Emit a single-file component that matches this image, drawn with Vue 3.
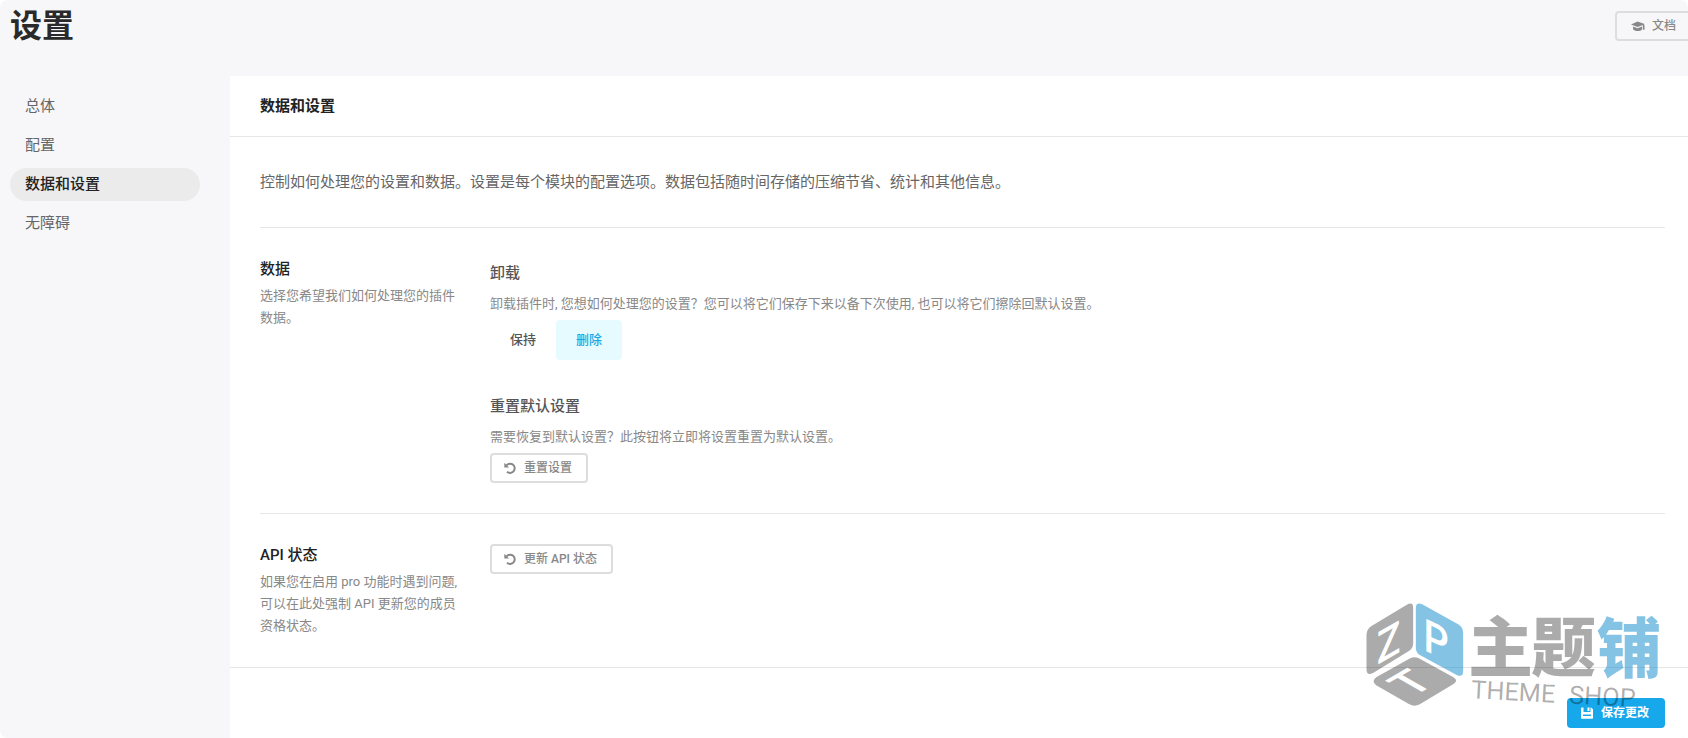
<script setup>
import { ref } from 'vue'

const tabs = ['总体', '配置', '数据和设置', '无障碍']
const current = ref('数据和设置')

const uninstall = ref('remove')
const uninstallOptions = [
  { value: 'keep', label: '保持' },
  { value: 'remove', label: '删除' },
]
</script>

<template>
  <div class="page">
    <header class="page-header">
      <h1>设置</h1>
      <button type="button" class="btn btn-ghost btn-docs">
        <svg class="icon icon-docs" viewBox="0 0 14 12" aria-hidden="true">
          <path d="M6.500 1.500 0 4.500 6.500 7 11.800 5v4.500q.8.500 1.800 0Q13.800 6 13 3.800z" />
          <path d="M2 6.400v2.800C3.300 10.500 5 11 6.800 11s3.200-.5 4.200-1.500V6.500L6.500 8.200z" />
        </svg>
        文档
      </button>
    </header>

    <div class="layout">
      <nav class="side-nav">
        <a
          v-for="tab in tabs"
          :key="tab"
          href="#"
          :class="{ current: current === tab }"
          @click.prevent="current = tab"
        >{{ tab }}</a>
      </nav>

      <main class="box">
        <div class="box-header">
          <h2>数据和设置</h2>
        </div>

        <div class="box-body">
          <p class="intro">控制如何处理您的设置和数据。设置是每个模块的配置选项。数据包括随时间存储的压缩节省、统计和其他信息。</p>

          <section class="row">
            <div>
              <h3>数据</h3>
              <p class="description">选择您希望我们如何处理您的插件数据。</p>
            </div>
            <div class="fields">
              <fieldset class="field">
                <legend class="field-title">卸载</legend>
                <p class="description">卸载插件时, 您想如何处理您的设置？您可以将它们保存下来以备下次使用, 也可以将它们擦除回默认设置。</p>
                <div class="side-tabs">
                  <label
                    v-for="option in uninstallOptions"
                    :key="option.value"
                    :class="{ active: uninstall === option.value }"
                  >
                    <input v-model="uninstall" type="radio" name="uninstall" :value="option.value">
                    {{ option.label }}
                  </label>
                </div>
              </fieldset>

              <div class="field">
                <h4 class="field-title">重置默认设置</h4>
                <p class="description">需要恢复到默认设置？此按钮将立即将设置重置为默认设置。</p>
                <button type="button" class="btn btn-ghost">
                  <svg class="icon" viewBox="0 0 12 12" aria-hidden="true">
                    <path d="M2.600 3.300A4.600 4.600 0 1 1 3 9.700" fill="none" stroke="currentColor" stroke-width="2" />
                    <path d="M0.300 0.800v4.700H5z" />
                  </svg>
                  重置设置
                </button>
              </div>
            </div>
          </section>

          <section class="row">
            <div>
              <h3>API 状态</h3>
              <p class="description">如果您在启用 pro 功能时遇到问题, 可以在此处强制 API 更新您的成员资格状态。</p>
            </div>
            <div class="fields">
              <button type="button" class="btn btn-ghost">
                <svg class="icon" viewBox="0 0 12 12" aria-hidden="true">
                  <path d="M2.600 3.300A4.600 4.600 0 1 1 3 9.700" fill="none" stroke="currentColor" stroke-width="2" />
                  <path d="M0.300 0.800v4.700H5z" />
                </svg>
                更新 API 状态
              </button>
            </div>
          </section>
        </div>

        <div class="box-footer">
          <button type="button" class="btn btn-blue">
            <svg class="icon" viewBox="0 0 12 12" aria-hidden="true">
              <path fill-rule="evenodd" d="M1 .5h1.500V5h7V.5h.7L12 2.200V11a.8.8 0 0 1-.8.8H.8A.8.8 0 0 1 0 11V1.500a1 1 0 0 1 1-1zM2 7.500v1.500h8V7.500z" />
              <path d="M6.500.5h2V4h-2z" />
            </svg>
            保存更改
          </button>
        </div>
      </main>
    </div>

    <svg class="watermark" viewBox="50 30 890 330" role="img" aria-label="主题铺 THEME SHOP">
      <g class="mark-gray">
        <path d="M57 135Q57 118 72 108L178 44Q197 34 197 54V160Q197 176 183 184L78 248Q57 260 57 238z" />
        <path d="M86 262 188 205Q201 198 214 205L318 262Q334 272 318 282L222 340Q204 353 184 342L86 286Q70 274 86 262z" />
      </g>
      <path class="mark-blue" d="M205 54Q205 34 224 43L332 103Q347 112 347 129V242Q347 265 326 254L217 195Q205 188 205 174z" />
      <g class="mark-letters">
        <text transform="matrix(.87 -.5 0 1 88 226)">Z</text>
        <text transform="matrix(.87 .4 0 1 228 180)">P</text>
        <text transform="matrix(.87 -.5 .87 .5 194 322)">T</text>
      </g>
      <g class="mark-name">
        <text class="mark-gray" x="362 551" y="244">主题</text>
        <text class="mark-blue" x="748" y="246">铺</text>
      </g>
      <text class="mark-tagline mark-gray" transform="translate(370 325) rotate(3)">THEME <tspan x="294">SHOP</tspan></text>
    </svg>
  </div>
</template>

<style>
body {
  margin: 0;
  background: #fff;
}
</style>

<style scoped>
.page {
  position: relative;
  overflow: hidden;
  border-radius: 8px;
  background: #f7f7f9;
  color: #666;
  font-family: Roboto, "Noto Sans CJK SC", sans-serif;
  font-size: 15px;
  line-height: 22px;
}

h1, h2, h3, h4, p {
  margin: 0;
}

.page-header {
  display: flex;
  align-items: center;
  justify-content: space-between;
  height: 52px;
  padding-inline-start: 10px;
  margin-block-end: 24px;
}

h1 {
  color: #2a2a2a;
  font-size: 32px;
  font-weight: 700;
  line-height: 40px;
}

.layout {
  display: grid;
  grid-template-columns: 190px minmax(0, 1fr);
  gap: 30px;
  padding-inline-start: 10px;
}

.side-nav {
  display: flex;
  flex-direction: column;
  gap: 6px;
  padding-block-start: 14px;

  a {
    padding: 0 15px;
    border-radius: 20px;
    color: #666;
    line-height: 33px;
    text-decoration: none;
  }

  .current {
    background: #ebebec;
    color: #222;
    font-weight: 500;
  }
}

.box {
  background: #fff;
}

.box-header {
  padding: 15px 30px;
  border-block-end: 1px solid #e6e6e6;
}

h2 {
  color: #222;
  font-size: 15px;
  font-weight: 700;
  line-height: 30px;
}

.box-body {
  padding: 30px 23px 0 30px;
}

.intro {
  padding-block-end: 30px;
  line-height: 30px;
}

.row {
  display: grid;
  grid-template-columns: 200px minmax(0, 1fr);
  gap: 30px;
  padding: 30px 0;
  border-block-start: 1px solid #e6e6e6;
}

h3 {
  margin-block-end: 5px;
  color: #222;
  font-size: 15px;
  font-weight: 500;
}

.description {
  color: #888;
  font-size: 13px;
}

.fields {
  display: flex;
  flex-direction: column;
  align-items: flex-start;
  gap: 31px;
}

.field {
  min-width: 0;
  margin: 0;
  padding: 0;
  border: 0;

  .description {
    margin-block-end: 5px;
  }
}

.field-title {
  padding: 4px 0 9px;
  color: #555;
  font-size: 15px;
  font-weight: 500;
}

.side-tabs {
  display: flex;

  label {
    position: relative;
    padding: 0 20px;
    border-radius: 4px;
    color: #555;
    font-size: 13px;
    font-weight: 500;
    line-height: 40px;
    cursor: pointer;
  }

  .active {
    background: #e6fbff;
    color: #17a8e3;
  }

  input {
    position: absolute;
    inset: 0;
    margin: 0;
    opacity: 0;
    cursor: pointer;
  }
}

.btn {
  display: inline-flex;
  align-items: center;
  gap: 8px;
  height: 30px;
  padding: 0 14px 0 12px;
  border: 2px solid transparent;
  border-radius: 4px;
  font-family: inherit;
  font-size: 12px;
  font-weight: 500;
  line-height: 16px;
  white-space: nowrap;
  cursor: pointer;
}

.btn-ghost {
  border-color: #ddd;
  background: transparent;
  color: #888;
}

/* the docs button runs past the right edge of the page */
.btn-docs {
  padding-inline-start: 14px;
  margin-inline-end: -4px;
}

.btn-blue {
  background: #17a8eb;
  color: #fff;
  font-weight: 700;
}

.icon {
  width: 12px;
  height: 12px;
  fill: currentColor;
}

.icon-docs {
  width: 14px;
  margin-inline-end: -1px;
}

.box-footer {
  display: flex;
  justify-content: flex-end;
  padding: 30px 23px 10px 30px;
  border-block-start: 1px solid #e6e6e6;
}

.watermark {
  position: absolute;
  right: 27px;
  bottom: 28px;
  width: 297px;
  height: 110px;
  overflow: visible;
  pointer-events: none;
}

.mark-gray {
  fill: rgb(0 0 0 / 33%);
}

.mark-blue {
  fill: rgb(0 130 200 / 48%);
}

.mark-letters {
  fill: #fff;
  font-size: 136px;
  font-weight: 500;
}

.mark-name {
  font-family: "Noto Sans CJK SC", sans-serif;
  font-size: 194px;
  font-weight: 900;
}

.mark-tagline {
  font-size: 76px;
}
</style>
